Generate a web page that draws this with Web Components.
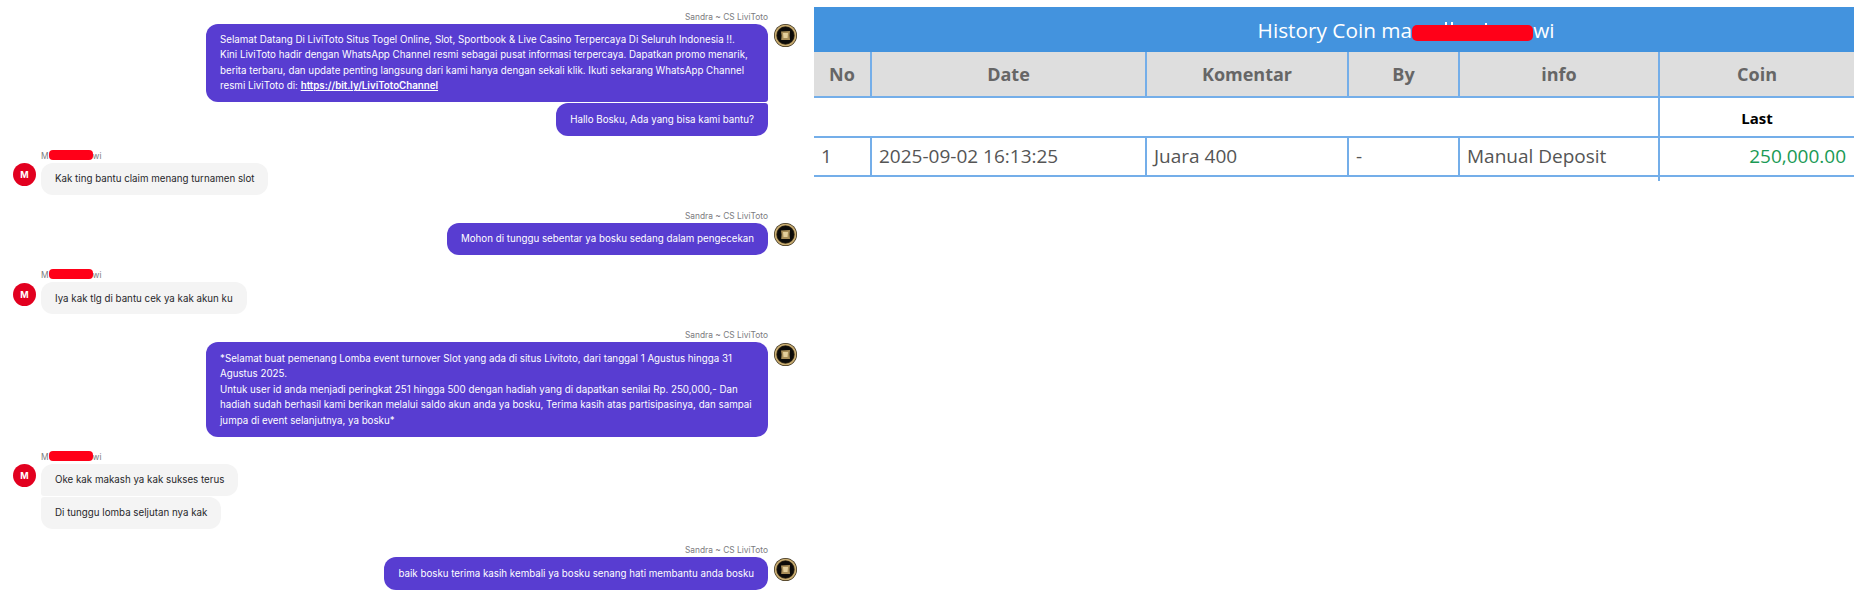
<!DOCTYPE html>
<html lang="id">
<head>
<meta charset="utf-8">
<title>Chat and coin history</title>
<style>
  html, body { margin: 0; background: #fff; }
  body { display: flex; align-items: flex-start; width: 1854px; height: 601px; overflow: hidden; }
</style>
</head>
<body>
<chat-panel>
  <chat-group side="agent" name="Sandra ~ CS LiviToto">
    <chat-bubble>Selamat Datang Di LiviToto Situs Togel Online, Slot, Sportbook &amp; Live Casino Terpercaya Di Seluruh Indonesia !!.<br>Kini LiviToto hadir dengan WhatsApp Channel resmi sebagai pusat informasi terpercaya. Dapatkan promo menarik, berita terbaru, dan update penting langsung dari kami hanya dengan sekali klik. Ikuti sekarang WhatsApp Channel resmi LiviToto di: <a href="#">https://bit.ly/LiviTotoChannel</a></chat-bubble>
    <chat-bubble>Hallo Bosku, Ada yang bisa kami bantu?</chat-bubble>
  </chat-group>
  <chat-group side="customer">
    <chat-bubble>Kak ting bantu claim menang turnamen slot</chat-bubble>
  </chat-group>
  <chat-group side="agent" name="Sandra ~ CS LiviToto">
    <chat-bubble>Mohon di tunggu sebentar ya bosku sedang dalam pengecekan</chat-bubble>
  </chat-group>
  <chat-group side="customer">
    <chat-bubble>Iya kak tlg di bantu cek ya kak akun ku</chat-bubble>
  </chat-group>
  <chat-group side="agent" name="Sandra ~ CS LiviToto">
    <chat-bubble>*Selamat buat pemenang Lomba event turnover Slot yang ada di situs Livitoto, dari tanggal 1 Agustus hingga 31 Agustus 2025.<br>Untuk user id anda menjadi peringkat 251 hingga 500 dengan hadiah yang di dapatkan senilai Rp. 250,000,- Dan hadiah sudah berhasil kami berikan melalui saldo akun anda ya bosku, Terima kasih atas partisipasinya, dan sampai jumpa di event selanjutnya, ya bosku*</chat-bubble>
  </chat-group>
  <chat-group side="customer">
    <chat-bubble>Oke kak makash ya kak sukses terus</chat-bubble>
    <chat-bubble>Di tunggu lomba seljutan nya kak</chat-bubble>
  </chat-group>
  <chat-group side="agent" name="Sandra ~ CS LiviToto">
    <chat-bubble>baik bosku terima kasih kembali ya bosku senang hati membantu anda bosku</chat-bubble>
  </chat-group>
</chat-panel>

<history-table></history-table>

<script>
// red scribble that hides a name
class RedactMark extends HTMLElement {
  constructor() {
    super();
    this.attachShadow({ mode: 'open' });
    this.shadowRoot.innerHTML = `
      <style>
        :host {
          display: inline-block;
          position: relative;
          width: var(--mark-w, 44px);
          height: var(--mark-h, 10px);
          border-radius: var(--mark-r, 4px);
          background: #ff0018;
          vertical-align: var(--mark-v, -1px);
        }
        /* tops of the hidden letters stick out above the big mark */
        :host([peek])::before {
          content: "";
          position: absolute;
          left: 0;
          right: 0;
          top: -3px;
          height: 3px;
          background:
            linear-gradient(#fff, #fff) 33px 0 / 2px 3px no-repeat,
            linear-gradient(#fff, #fff) 39px 0 / 2px 3px no-repeat,
            linear-gradient(#fff, #fff) 73px 1px / 2px 2px no-repeat;
        }
      </style>
    `;
  }
}

class ChatAvatar extends HTMLElement {
  static get observedAttributes() { return ['kind']; }

  constructor() {
    super();
    this.attachShadow({ mode: 'open' });
    this.shadowRoot.innerHTML = `
      <style>
        :host { display: block; width: 23px; height: 23px; }
        svg { display: block; }
      </style>
      <svg width="23" height="23" viewBox="0 0 23 23"></svg>
    `;
  }

  attributeChangedCallback() {
    const svg = this.shadowRoot.querySelector('svg');
    if (this.getAttribute('kind') === 'agent') {
      svg.innerHTML = `
        <circle cx="11.5" cy="11.5" r="11.5" fill="#3a2f1a"/>
        <circle cx="11.5" cy="11.5" r="10" fill="none" stroke="#c9ad72" stroke-width="1.6"/>
        <circle cx="11.5" cy="11.5" r="8.4" fill="#0c0b09"/>
        <path d="M7 7.5 L16 7 L15.6 11.5 L16 16 L7.2 16 L7.6 11.5 Z" fill="#a98e58"/>
        <path d="M9 9 L14 9 L13.5 14 L9.5 14 Z" fill="#e4cf9c"/>`;
    } else {
      svg.innerHTML = `
        <circle cx="11.5" cy="11.5" r="11.5" fill="#e2001f"/>
        <text x="11.5" y="15" text-anchor="middle" fill="#fff" font-family="Inter, sans-serif" font-size="9" font-weight="700">M</text>`;
    }
  }
}

class ChatBubble extends HTMLElement {
  constructor() {
    super();
    this.attachShadow({ mode: 'open' });
    this.shadowRoot.innerHTML = `
      <style>
        :host {
          display: block;
          width: fit-content;
          max-width: 562px;
          box-sizing: border-box;
          padding: 8.4px 14px;
          font: 400 9.75px/15.5px Inter, "Liberation Sans", sans-serif;
          background: var(--bubble-bg);
          color: var(--bubble-fg);
          border-radius: var(--r-tl, 12px) var(--r-tr, 12px) var(--r-br, 12px) var(--r-bl, 12px);
        }
        ::slotted(a) { color: inherit; font-weight: 600; text-decoration: underline; }
      </style>
      <slot></slot>
    `;
  }
}

class ChatGroup extends HTMLElement {
  constructor() {
    super();
    this.attachShadow({ mode: 'open' });
    this.shadowRoot.innerHTML = `
      <style>
        :host { display: grid; row-gap: 0; }
        :host([side="agent"]) {
          grid-template-columns: 1fr 23px;
          column-gap: 6px;
          --bubble-bg: #583dd1;
          --bubble-fg: #fff;
          --name-h: 14px;
        }
        :host([side="customer"]) {
          grid-template-columns: 23px 1fr;
          column-gap: 5px;
          --bubble-bg: #f4f4f4;
          --bubble-fg: #27272a;
          --name-h: 13px;
        }
        .name {
          font: 400 8.4px/var(--name-h) Inter, "Liberation Sans", sans-serif;
          color: #7b7b80;
          grid-row: 1;
        }
        .bubbles { grid-row: 2; display: flex; flex-direction: column; gap: 1px; }
        chat-avatar { grid-row: 2; align-self: start; margin-top: 0.5px; }
        :host([side="agent"]) .name { grid-column: 1; text-align: right; }
        :host([side="agent"]) .bubbles { grid-column: 1; align-items: flex-end; }
        :host([side="agent"]) chat-avatar { grid-column: 2; }
        :host([side="customer"]) .name { grid-column: 2; }
        :host([side="customer"]) .bubbles { grid-column: 2; align-items: flex-start; }
        :host([side="customer"]) chat-avatar { grid-column: 1; }
        :host([side="agent"]) ::slotted(chat-bubble:not(:last-child)) { --r-br: 3px; }
        :host([side="agent"]) ::slotted(chat-bubble:not(:first-child)) { --r-tr: 3px; }
        :host([side="customer"]) ::slotted(chat-bubble:not(:last-child)) { --r-bl: 3px; }
        :host([side="customer"]) ::slotted(chat-bubble:not(:first-child)) { --r-tl: 3px; }
      </style>
      <div class="name"></div>
      <div class="bubbles"><slot></slot></div>
      <chat-avatar></chat-avatar>
    `;
  }

  connectedCallback() {
    const side = this.getAttribute('side');
    this.shadowRoot.querySelector('chat-avatar').setAttribute('kind', side);
    const name = this.shadowRoot.querySelector('.name');
    if (side === 'agent') {
      name.textContent = this.getAttribute('name');
    } else {
      name.innerHTML = 'M<redact-mark></redact-mark>wi';
    }
  }
}

class ChatPanel extends HTMLElement {
  constructor() {
    super();
    this.attachShadow({ mode: 'open' });
    this.shadowRoot.innerHTML = `
      <style>
        :host {
          display: flex;
          flex-direction: column;
          gap: 14px;
          box-sizing: border-box;
          flex: 0 0 814px;
          padding: 9.5px 17px 0 13px;
        }
      </style>
      <slot></slot>
    `;
  }
}

class HistoryTable extends HTMLElement {
  constructor() {
    super();
    this.attachShadow({ mode: 'open' });
    this.shadowRoot.innerHTML = `
      <style>
        :host {
          display: block;
          flex: 0 0 1040px;
          padding-top: 7px;
          font-family: "Open Sans", "Liberation Sans", sans-serif;
        }
        table { width: 1040px; table-layout: fixed; border-collapse: collapse; }
        .title {
          height: 45px;
          padding: 0 0 0 144px;
          background: #4393de;
          color: #fff;
          font-size: 20.8px;
          font-weight: 400;
          text-align: center;
          --mark-w: 121px;
          --mark-h: 16px;
          --mark-r: 5px;
          --mark-v: -3px;
        }
        .head th {
          height: 44px;
          padding: 0;
          background: #dedede;
          color: #666;
          font-size: 18px;
          font-weight: 700;
          border: 2px solid #74aee9;
          border-top: 0;
        }
        .last td { height: 35.5px; padding: 2px 0 0; border-bottom: 2px solid #74aee9; }
        .last .spacer { border-left: 0; }
        .last .label {
          text-align: center;
          font-size: 15px;
          font-weight: 700;
          color: #000;
          border-left: 2px solid #74aee9;
        }
        .row td {
          height: 37.5px;
          padding: 0 8px 0 7px;
          color: #555;
          font-size: 19px;
          border: 2px solid #74aee9;
          border-top: 0;
        }
        .row td:first-child, .head th:first-child { border-left: 0; }
        .row td:last-child, .head th:last-child { border-right: 0; }
        .row .coin { text-align: right; color: #1a9a55; }
        .stub td { height: 4px; padding: 0; }
        .stub .cut { border-left: 2px solid #74aee9; }
      </style>
      <table>
        <colgroup>
          <col style="width:57px"><col style="width:275px"><col style="width:202px">
          <col style="width:111px"><col style="width:200px"><col style="width:195px">
        </colgroup>
        <thead>
          <tr><th class="title" colspan="6">History Coin ma<redact-mark peek></redact-mark>wi</th></tr>
          <tr class="head"><th>No</th><th>Date</th><th>Komentar</th><th>By</th><th>info</th><th>Coin</th></tr>
        </thead>
        <tbody>
          <tr class="last"><td class="spacer" colspan="5"></td><td class="label">Last</td></tr>
          <tr class="row"><td>1</td><td>2025-09-02 16:13:25</td><td>Juara 400</td><td>-</td><td>Manual Deposit</td><td class="coin">250,000.00</td></tr>
          <tr class="stub"><td colspan="5"></td><td class="cut"></td></tr>
        </tbody>
      </table>
    `;
  }
}

customElements.define('redact-mark', RedactMark);
customElements.define('chat-avatar', ChatAvatar);
customElements.define('chat-bubble', ChatBubble);
customElements.define('chat-group', ChatGroup);
customElements.define('chat-panel', ChatPanel);
customElements.define('history-table', HistoryTable);
</script>
</body>
</html>
